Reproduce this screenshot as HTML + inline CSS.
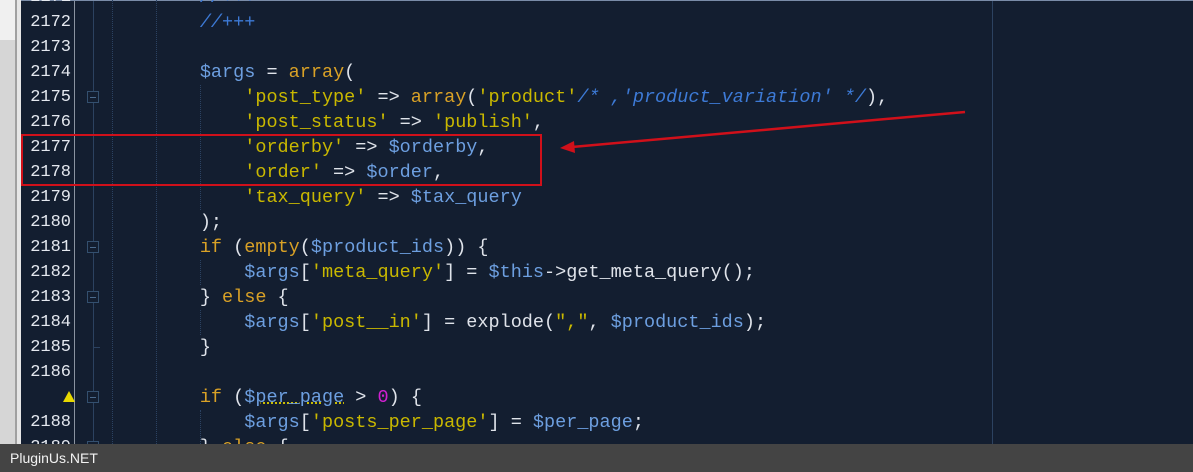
<!DOCTYPE html>
<html><head><meta charset="utf-8"><style>
*{margin:0;padding:0;box-sizing:border-box}
body{width:1193px;height:472px;overflow:hidden;background:#131e30;position:relative;font-family:"Liberation Mono",monospace}
.l{position:absolute;left:0;width:1193px;height:25px}
.n{position:absolute;left:21px;width:50px;text-align:right;color:#e4e8ef;font-size:17px;line-height:25px}
.c{position:absolute;left:111px;white-space:pre;color:#dfe3ea;font-size:18.5px;line-height:25px;top:0}
.s{color:#c9b800}.k{color:#d9a126}.v{color:#6d9fe0}.m{color:#3d7ad6;font-style:italic}.p{color:#d020d0}
.g{position:absolute;top:0;bottom:28px;border-left:1px dotted #2b4262}
.fb{position:absolute;left:87px;width:12px;height:12px;border:1px solid #34506f;background:#131e30}
.fb:after{content:"";position:absolute;left:2px;top:5px;width:6px;height:1px;background:#4b6a8c}
</style></head><body>
<div style="position:absolute;left:0;top:0;width:15px;height:40px;background:#f0f0f0"></div>
<div style="position:absolute;left:0;top:40px;width:15px;height:432px;background:#d6d6d6"></div>
<div style="position:absolute;left:15px;top:0;width:2px;height:472px;background:#a0a0a0"></div>
<div style="position:absolute;left:17px;top:0;width:4px;height:472px;background:#e6e6e6"></div>
<div style="position:absolute;left:74px;top:0;width:1px;height:472px;background:#8a93a0"></div>
<div style="position:absolute;left:93px;top:0;width:1px;height:472px;background:#2c4260"></div>
<div style="position:absolute;left:992px;top:0;width:1px;height:472px;background:#2c4260"></div>
<div style="position:absolute;left:21px;top:0;width:1172px;height:1px;background:#7a8ca8"></div>
<div class="g" style="left:112px"></div>
<div class="g" style="left:156px"></div>
<div class="g" style="left:200px;top:85px;height:125px"></div>
<div class="g" style="left:200px;top:260px;height:25px"></div>
<div class="g" style="left:200px;top:310px;height:25px"></div>
<div class="g" style="left:200px;top:410px;height:34px"></div>

<div class="l" style="top:-15px"><div class="n">2171</div><div class="c">        <span class="m">//+++</span></div></div>
<div class="l" style="top:10px"><div class="n">2172</div><div class="c">        <span class="m">//+++</span></div></div>
<div class="l" style="top:35px"><div class="n">2173</div></div>
<div class="l" style="top:60px"><div class="n">2174</div><div class="c">        <span class="v">$args</span> = <span class="k">array</span>(</div></div>
<div class="l" style="top:85px"><div class="n">2175</div><div class="fb" style="top:6px"></div><div class="c">            <span class="s">'post_type'</span> =&gt; <span class="k">array</span>(<span class="s">'product'</span><span class="m">/* ,'product_variation' */</span>),</div></div>
<div class="l" style="top:110px"><div class="n">2176</div><div class="c">            <span class="s">'post_status'</span> =&gt; <span class="s">'publish'</span>,</div></div>
<div class="l" style="top:135px"><div class="n">2177</div><div class="c">            <span class="s">'orderby'</span> =&gt; <span class="v">$orderby</span>,</div></div>
<div class="l" style="top:160px"><div class="n">2178</div><div class="c">            <span class="s">'order'</span> =&gt; <span class="v">$order</span>,</div></div>
<div class="l" style="top:185px"><div class="n">2179</div><div class="c">            <span class="s">'tax_query'</span> =&gt; <span class="v">$tax_query</span></div></div>
<div class="l" style="top:210px"><div class="n">2180</div><div class="c">        );</div></div>
<div class="l" style="top:235px"><div class="n">2181</div><div class="fb" style="top:6px"></div><div class="c">        <span class="k">if</span> (<span class="k">empty</span>(<span class="v">$product_ids</span>)) {</div></div>
<div class="l" style="top:260px"><div class="n">2182</div><div class="c">            <span class="v">$args</span>[<span class="s">'meta_query'</span>] = <span class="v">$this</span>-&gt;get_meta_query();</div></div>
<div class="l" style="top:285px"><div class="n">2183</div><div class="fb" style="top:6px"></div><div class="c">        } <span class="k">else</span> {</div></div>
<div class="l" style="top:310px"><div class="n">2184</div><div class="c">            <span class="v">$args</span>[<span class="s">'post__in'</span>] = explode(<span class="s">","</span>, <span class="v">$product_ids</span>);</div></div>
<div class="l" style="top:335px"><div class="n">2185</div><div style="position:absolute;left:93px;top:12px;width:7px;height:1px;background:#2c4260"></div><div class="c">        }</div></div>
<div class="l" style="top:360px"><div class="n">2186</div></div>
<div class="l" style="top:385px"><div style="position:absolute;left:63px;top:6px;width:0;height:0;border-left:6px solid transparent;border-right:6px solid transparent;border-bottom:11px solid #e8d800"></div><div class="fb" style="top:6px"></div><div class="c">        <span class="k">if</span> (<span class="v">$<span style="text-decoration:underline dotted #d8c800">per_page</span></span> &gt; <span class="p">0</span>) {</div></div>
<div class="l" style="top:410px"><div class="n">2188</div><div class="c">            <span class="v">$args</span>[<span class="s">'posts_per_page'</span>] = <span class="v">$per_page</span>;</div></div>
<div class="l" style="top:435px"><div class="n">2189</div><div class="fb" style="top:6px"></div><div class="c">        } <span class="k">else</span> {</div></div>

<div style="position:absolute;left:21px;top:134px;width:521px;height:52px;border:2px solid #d0101a"></div>
<svg style="position:absolute;left:0;top:0" width="1193" height="472"><line x1="965" y1="112" x2="572" y2="147" stroke="#d0101a" stroke-width="2.5"/><polygon points="560,148 574,141 575,153" fill="#d0101a"/></svg>
<div style="position:absolute;left:0;top:444px;width:1193px;height:28px;background:#444;color:#f2f2f2;font-family:'Liberation Sans',sans-serif;font-size:14px;line-height:28px;padding-left:10px">PluginUs.NET</div>
</body></html>
